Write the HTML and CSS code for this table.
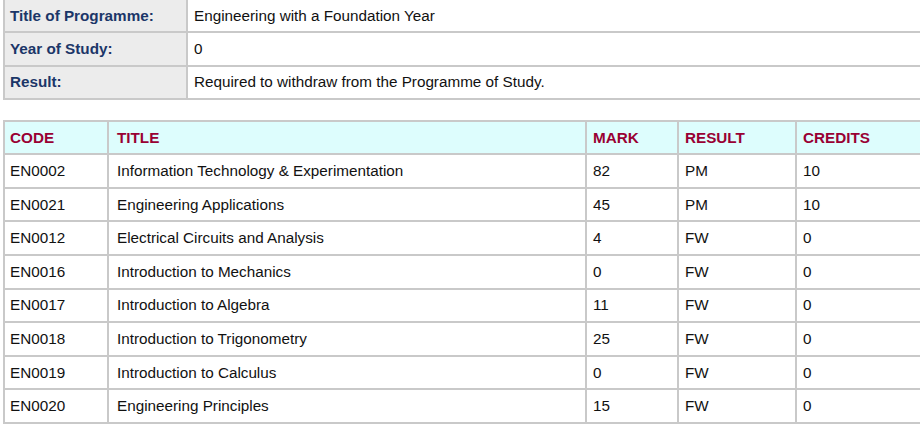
FILE: index.html
```html
<!DOCTYPE html>
<html lang="en">
<head>
<meta charset="utf-8">
<title>Programme Result</title>
<link rel="stylesheet" href="styles.css">
</head>
<body>
<div class="page">
  <table class="summary">
    <colgroup><col class="c-label"><col class="c-value"></colgroup>
    <tr><th>Title of Programme:</th><td>Engineering with a Foundation Year</td></tr>
    <tr><th>Year of Study:</th><td>0</td></tr>
    <tr class="last"><th>Result:</th><td>Required to withdraw from the Programme of Study.</td></tr>
  </table>

  <table class="modules">
    <colgroup>
      <col class="c-code"><col class="c-title"><col class="c-mark"><col class="c-result"><col class="c-credits">
    </colgroup>
    <thead>
      <tr><th>CODE</th><th class="t">TITLE</th><th>MARK</th><th>RESULT</th><th>CREDITS</th></tr>
    </thead>
    <tbody>
      <tr><td>EN0002</td><td class="t">Information Technology &amp; Experimentation</td><td>82</td><td>PM</td><td>10</td></tr>
      <tr><td>EN0021</td><td class="t">Engineering Applications</td><td>45</td><td>PM</td><td>10</td></tr>
      <tr><td>EN0012</td><td class="t">Electrical Circuits and Analysis</td><td>4</td><td>FW</td><td>0</td></tr>
      <tr><td>EN0016</td><td class="t">Introduction to Mechanics</td><td>0</td><td>FW</td><td>0</td></tr>
      <tr><td>EN0017</td><td class="t">Introduction to Algebra</td><td>11</td><td>FW</td><td>0</td></tr>
      <tr><td>EN0018</td><td class="t">Introduction to Trigonometry</td><td>25</td><td>FW</td><td>0</td></tr>
      <tr><td>EN0019</td><td class="t">Introduction to Calculus</td><td>0</td><td>FW</td><td>0</td></tr>
      <tr><td>EN0020</td><td class="t">Engineering Principles</td><td>15</td><td>FW</td><td>0</td></tr>
    </tbody>
  </table>
</div>
</body>
</html>
```
FILE: styles.css
```css
html, body {
  margin: 0;
  padding: 0;
  background: #ffffff;
  overflow: hidden;
}

body {
  font-family: "Liberation Sans", Arial, Helvetica, sans-serif;
  font-size: 15.25px;
  color: #111111;
}

.page {
  padding-left: 3px;
  width: 960px;
}

table {
  border-collapse: separate;
  border-spacing: 2px;
  background: #c9c9c9;
  table-layout: fixed;
}

th, td {
  box-sizing: border-box;
  text-align: left;
  vertical-align: middle;
  padding: 0 6px;
  line-height: 18px;
}

/* Summary table */
.summary {
  width: 950px;
  margin-top: -2px;
}

.summary .c-label { width: 181px; }

.summary th {
  background: #ececec;
  color: #1b3668;
  font-weight: bold;
  padding-left: 5px;
  height: 31.4px;
}

.summary td {
  background: #ffffff;
  padding-left: 6px;
  height: 31.4px;
}

/* Modules table */
.modules {
  width: 950px;
  margin-top: 20px;
}

.modules .c-code { width: 102px; }
.modules .c-title { width: 476px; }
.modules .c-mark { width: 90px; }
.modules .c-result { width: 116px; }

.modules thead th {
  background: #ddfdfd;
  color: #990033;
  font-weight: bold;
  height: 31px;
}

.modules tbody td {
  background: #ffffff;
  height: 31.6px;
}

.modules th:first-child,
.modules td:first-child {
  padding-left: 5px;
}

.modules .t {
  padding-left: 8px;
}
```
